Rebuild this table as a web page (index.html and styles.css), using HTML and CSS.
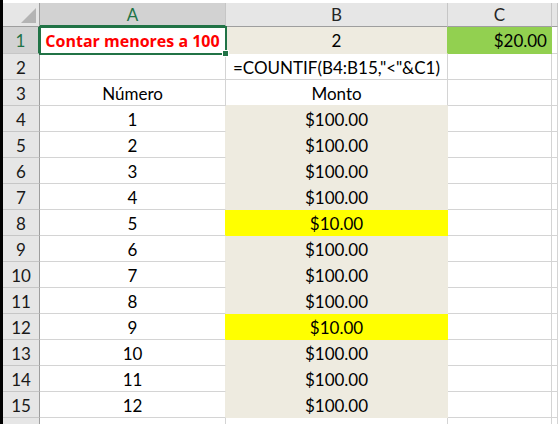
FILE: index.html
```html
<!DOCTYPE html>
<html lang="es">
<head>
<meta charset="utf-8">
<title>COUNTIF</title>
<link rel="stylesheet" href="styles.css">
</head>
<body>
<div class="frame">
  <div class="edge"></div>
  <div class="sheet">
    <div class="grid">
      <div class="hd corner"><div class="tri"></div></div>
      <div class="hd col sel-col">A</div>
      <div class="hd col">B</div>
      <div class="hd col">C</div>
      <div class="hd col"></div>

      <div class="rh sel-row">1</div>
      <div class="c a bold red to-tan">Contar menores a 100</div>
      <div class="c b tan to-green">2</div>
      <div class="c cc green num-r">$20.00</div>
      <div class="c d"></div>

      <div class="rh">2</div>
      <div class="c a"></div>
      <div class="c b">=COUNTIF(B4:B15,"&lt;"&amp;C1)</div>
      <div class="c cc"></div>
      <div class="c d"></div>

      <div class="rh">3</div>
      <div class="c a">Número</div>
      <div class="c b below-tan">Monto</div>
      <div class="c cc"></div>
      <div class="c d"></div>

      <div class="rh">4</div>
      <div class="c a to-tan">1</div>
      <div class="c b tan">$100.00</div>
      <div class="c cc"></div>
      <div class="c d"></div>

      <div class="rh">5</div>
      <div class="c a to-tan">2</div>
      <div class="c b tan">$100.00</div>
      <div class="c cc"></div>
      <div class="c d"></div>

      <div class="rh">6</div>
      <div class="c a to-tan">3</div>
      <div class="c b tan">$100.00</div>
      <div class="c cc"></div>
      <div class="c d"></div>

      <div class="rh">7</div>
      <div class="c a to-tan">4</div>
      <div class="c b tan">$100.00</div>
      <div class="c cc"></div>
      <div class="c d"></div>

      <div class="rh">8</div>
      <div class="c a to-yellow">5</div>
      <div class="c b yellow">$10.00</div>
      <div class="c cc"></div>
      <div class="c d"></div>

      <div class="rh">9</div>
      <div class="c a to-tan">6</div>
      <div class="c b tan">$100.00</div>
      <div class="c cc"></div>
      <div class="c d"></div>

      <div class="rh">10</div>
      <div class="c a to-tan">7</div>
      <div class="c b tan">$100.00</div>
      <div class="c cc"></div>
      <div class="c d"></div>

      <div class="rh">11</div>
      <div class="c a to-tan">8</div>
      <div class="c b tan">$100.00</div>
      <div class="c cc"></div>
      <div class="c d"></div>

      <div class="rh">12</div>
      <div class="c a to-yellow">9</div>
      <div class="c b yellow">$10.00</div>
      <div class="c cc"></div>
      <div class="c d"></div>

      <div class="rh">13</div>
      <div class="c a to-tan">10</div>
      <div class="c b tan">$100.00</div>
      <div class="c cc"></div>
      <div class="c d"></div>

      <div class="rh">14</div>
      <div class="c a to-tan">11</div>
      <div class="c b tan">$100.00</div>
      <div class="c cc"></div>
      <div class="c d"></div>

      <div class="rh">15</div>
      <div class="c a to-tan">12</div>
      <div class="c b tan">$100.00</div>
      <div class="c cc"></div>
      <div class="c d"></div>

      <div class="rh last"></div>
      <div class="c a last"></div>
      <div class="c b last"></div>
      <div class="c cc last"></div>
      <div class="c d last"></div>

      <div class="selection"><div class="handle"></div></div>
    </div>
  </div>
</div>
</body>
</html>
```

FILE: styles.css
```css
* { box-sizing: border-box; }
html, body {
  margin: 0;
  padding: 0;
  background: #ffffff;
  overflow: hidden;
}
.frame {
  display: flex;
  width: 558px;
  height: 424px;
}
.edge {
  width: 3px;
  flex: none;
  background: #000000;
}
.sheet {
  flex: 1;
  padding-top: 3px;
  overflow: hidden;
}
.grid {
  position: relative;
  display: grid;
  grid-template-columns: 37px 186px 222px 104px 1fr;
  grid-template-rows: 24px 27px repeat(14, 26px) 1fr;
  height: 421px;
  font-family: Lato, "Liberation Sans", sans-serif;
  font-size: 17px;
  color: #000000;
}
.hd {
  background: #e6e6e6;
  border-right: 1px solid #c6c6c6;
  border-bottom: 1px solid #9e9e9e;
  display: flex;
  align-items: center;
  justify-content: center;
  color: #262626;
}
.corner {
  border-right-color: #9e9e9e;
  align-items: flex-end;
  justify-content: flex-end;
  padding: 0 3px 3px 0;
}
.tri {
  width: 15px;
  height: 15px;
  background: #b4b4b4;
  clip-path: polygon(100% 0, 100% 100%, 0 100%);
}
.sel-col {
  background: #d2d2d2;
  color: #217346;
  border-bottom: 2px solid #217346;
}
.rh {
  background: #e6e6e6;
  border-right: 1px solid #9e9e9e;
  border-bottom: 1px solid #c6c6c6;
  display: flex;
  align-items: center;
  justify-content: center;
  padding-top: 1px;
  color: #1a1a1a;
}
.sel-row {
  background: #d2d2d2;
  color: #217346;
  border-right: 2px solid #217346;
}
.c {
  border-right: 1px solid #d4d4d4;
  border-bottom: 1px solid #d4d4d4;
  display: flex;
  align-items: center;
  justify-content: center;
  padding-top: 1px;
  white-space: nowrap;
}
.bold {
  font-family: "Open Sans", "Liberation Sans", sans-serif;
  font-size: 16px;
  font-weight: 700;
}
.red { color: #ff0000; }
.num-r {
  justify-content: flex-end;
  padding-right: 4px;
}
.tan {
  background: #eeebe0;
  border-color: #eeebe0;
}
.yellow {
  background: #ffff00;
  border-color: #ffff00;
}
.green {
  background: #92d050;
  border-color: #92d050;
}
.to-tan { border-right-color: #eeebe0; }
.to-yellow { border-right-color: #ffff00; }
.to-green { border-right-color: #92d050; }
.below-tan { border-bottom-color: #eeebe0; }
.last { border-bottom: none; }
.rh.last { border-bottom: none; }
.selection {
  position: absolute;
  left: 36px;
  top: 23px;
  width: 188px;
  height: 29px;
  border: 2px solid #217346;
  pointer-events: none;
}
.handle {
  position: absolute;
  right: -4px;
  bottom: -4px;
  width: 7px;
  height: 7px;
  background: #217346;
  border: 1px solid #ffffff;
}
```
